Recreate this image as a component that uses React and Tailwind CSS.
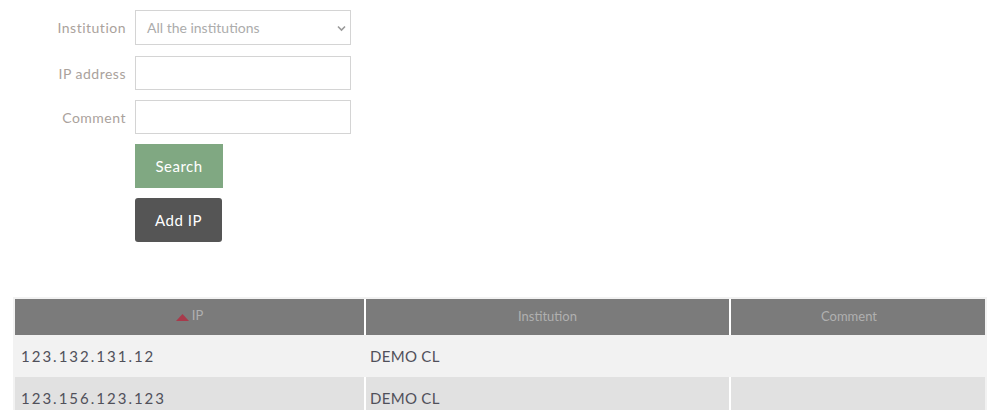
import React from "react";

const font = { fontFamily: "Lato, 'Open Sans', sans-serif" };

function Field({ label, children }) {
  return (
    <div className="flex items-center gap-[9px]">
      <label className="w-[126px] text-right text-[14px] tracking-[0.5px] text-[#aaa29c]">
        {label}
      </label>
      {children}
    </div>
  );
}

export default function App() {
  const rows = [
    { ip: "123.132.131.12", institution: "DEMO CL", comment: "" },
    { ip: "123.156.123.123", institution: "DEMO CL", comment: "" },
  ];

  return (
    <div className="w-[994px] h-[410px] overflow-hidden bg-white" style={font}>
      <div className="pt-[10px] flex flex-col">
        <Field label="Institution">
          <div className="relative w-[216px] h-[35px] border border-[#d4d4d4] bg-white flex items-center">
            <span className="pl-[11px] text-[14px] text-[#acacac]">All the institutions</span>
            <svg
              className="absolute right-[4px] top-[14px]"
              width="9"
              height="7"
              viewBox="0 0 9 7"
            >
              <path d="M1 1.5 L4.5 5 L8 1.5" fill="none" stroke="#9a9a9a" strokeWidth="1.6" />
            </svg>
          </div>
        </Field>
        <div className="mt-[11px]">
          <Field label="IP address">
            <div className="w-[216px] h-[34px] border border-[#d4d4d4] bg-white" />
          </Field>
        </div>
        <div className="mt-[10px]">
          <Field label="Comment">
            <div className="w-[216px] h-[34px] border border-[#d4d4d4] bg-white" />
          </Field>
        </div>
        <div className="pl-[135px] mt-[10px] flex flex-col gap-[10px] items-start">
          <button className="w-[88px] h-[44px] bg-[#80a882] text-white text-[15px] tracking-[0.5px]">
            Search
          </button>
          <button className="w-[87px] h-[44px] bg-[#555555] rounded-[3px] text-white text-[15px] tracking-[0.5px]">
            Add IP
          </button>
        </div>
      </div>

      <div className="mt-[55px] ml-[13px] w-[974px] bg-[#f2f2f2] pl-[2px] pt-[2px] pr-[2px]">
        <div className="flex h-[36px] bg-[#7b7b7b] text-[13px] text-[#b0b0b0]">
          <div className="w-[351px] border-r-2 border-white flex items-center justify-center gap-[3px]">
            <svg width="13" height="7" viewBox="0 0 13 7">
              <path d="M0 7 L6.5 0 L13 7 Z" fill="#a83a4b" />
            </svg>
            <span className="-mt-[3px]">IP</span>
          </div>
          <div className="w-[365px] border-r-2 border-white flex items-center justify-center">
            Institution
          </div>
          <div className="flex-1 flex items-center justify-center pr-[18px]">Comment</div>
        </div>
        {rows.map((r, i) => (
          <div
            key={r.ip}
            className={
              i % 2 === 0
                ? "flex h-[42px] bg-[#f2f2f2] text-[15px] text-[#50505a]"
                : "flex h-[42px] bg-[#e1e1e1] text-[15px] text-[#50505a]"
            }
          >
            <div
              className={
                i % 2 === 0
                  ? "w-[351px] border-r-2 border-[#f2f2f2] flex items-center pl-[6px] tracking-[2px]"
                  : "w-[351px] border-r-2 border-white flex items-center pl-[6px] tracking-[2px]"
              }
            >
              {r.ip}
            </div>
            <div
              className={
                i % 2 === 0
                  ? "w-[365px] border-r-2 border-[#f2f2f2] flex items-center pl-[4px] tracking-[0.3px]"
                  : "w-[365px] border-r-2 border-white flex items-center pl-[4px] tracking-[0.3px]"
              }
            >
              {r.institution}
            </div>
            <div className="flex-1 flex items-center">{r.comment}</div>
          </div>
        ))}
      </div>
    </div>
  );
}
